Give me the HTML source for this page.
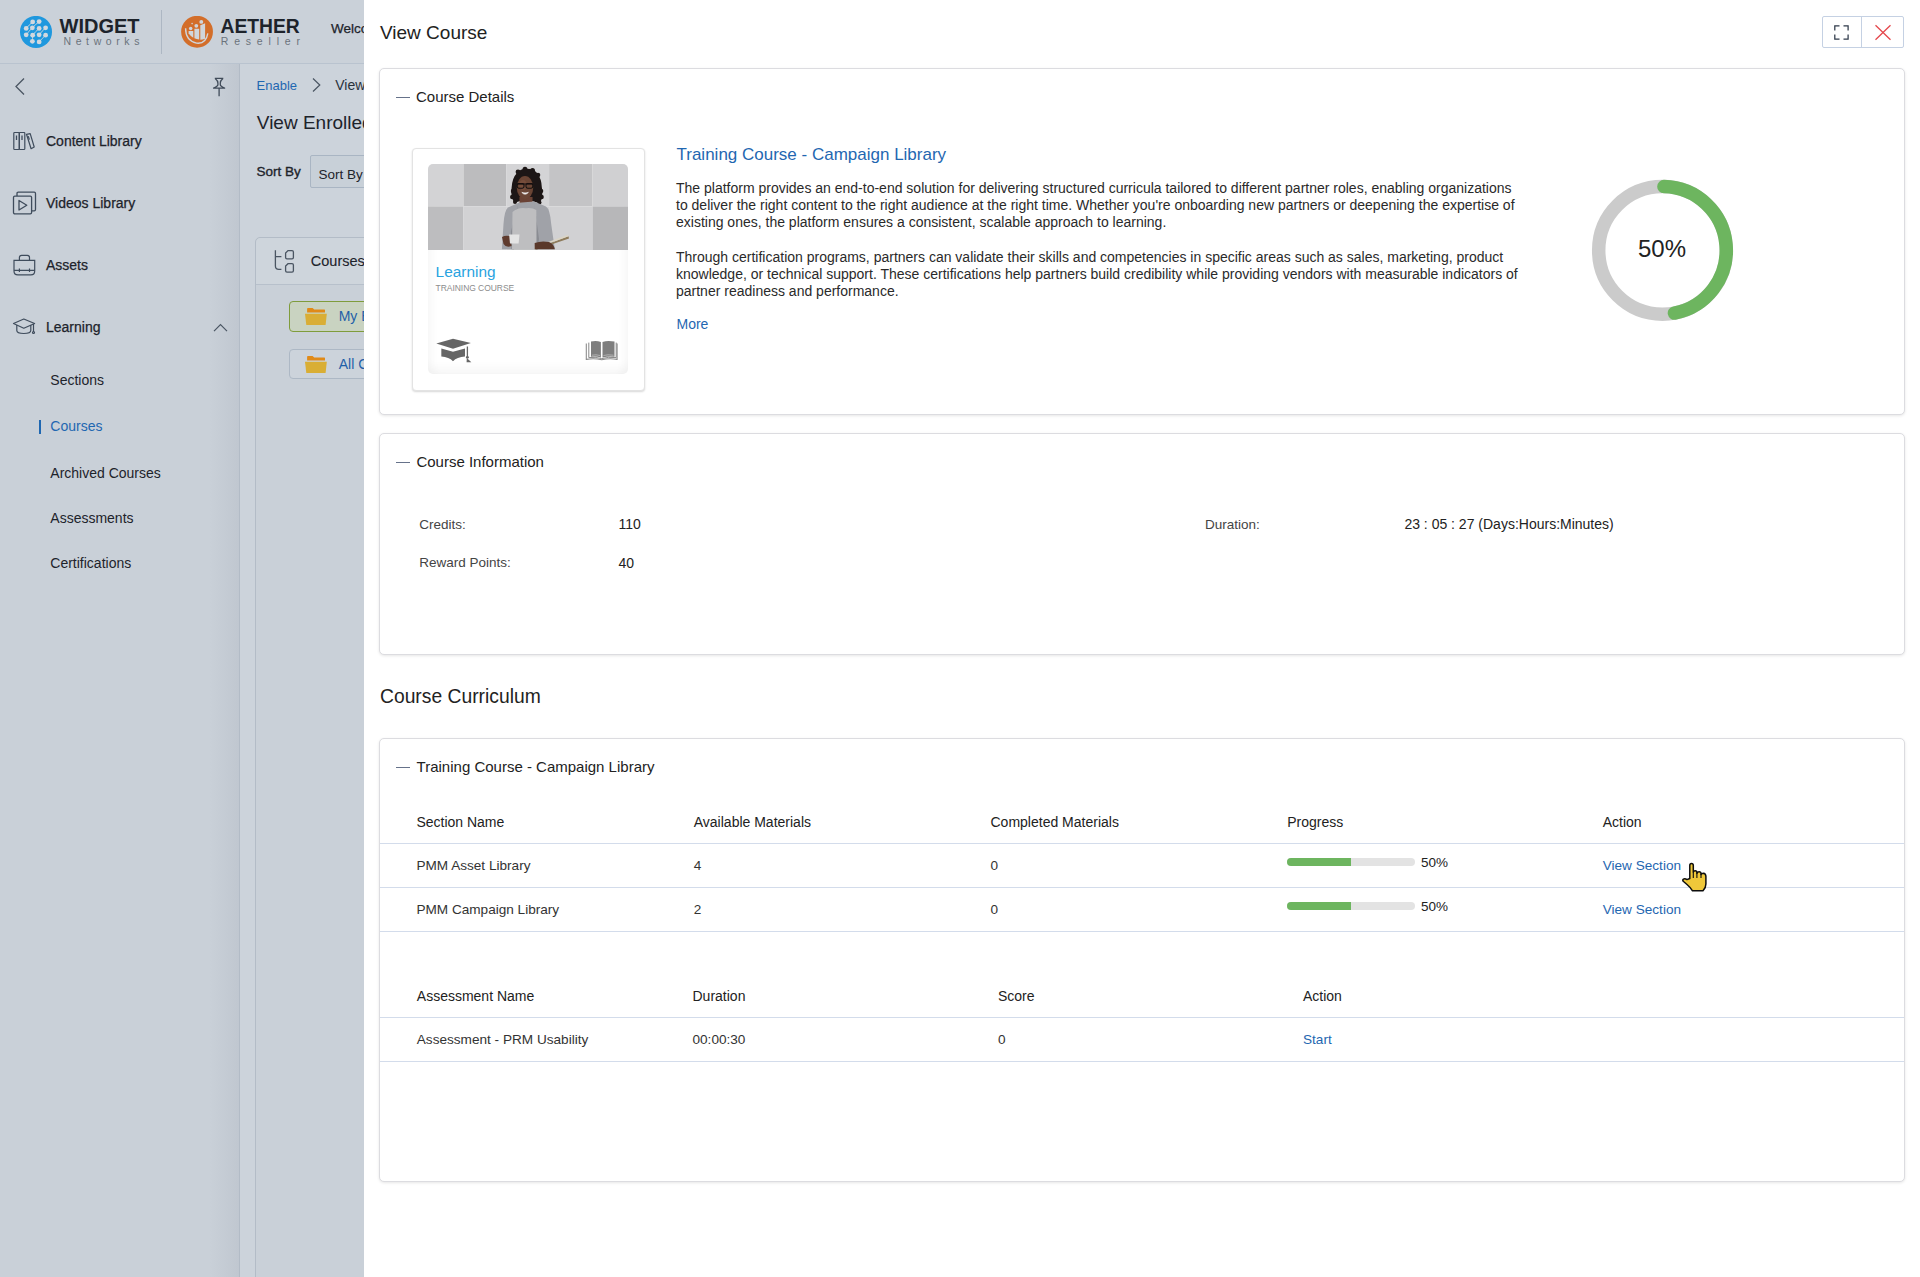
<!DOCTYPE html>
<html><head><meta charset="utf-8">
<style>
*{margin:0;padding:0;box-sizing:border-box}
html,body{width:1920px;height:1277px;overflow:hidden;background:#ccd3db;font-family:"Liberation Sans",sans-serif;color:#222}
.t{position:absolute;white-space:nowrap;line-height:1}
.a{position:absolute}
.card{position:absolute;left:379px;width:1526px;background:#fff;border:1px solid #dcdce0;border-radius:5px;box-shadow:0 1px 3px rgba(0,0,0,.10)}
.dash{position:absolute;left:396px;width:14px;height:1.5px;background:#66728a}

.hl{position:absolute;left:380px;width:1524px;height:1px;background:#d3dceb}
.sb{color:#1d232b;font-size:14px}
.th{font-size:14px;color:#222}
.td{font-size:13.6px;color:#333}
.lnk,.td.lnk{color:#1f67b1}
</style></head><body>
<!-- ===== HEADER ===== -->
<div class="a" id="hdr" style="left:0;top:0;width:364px;height:64px;background:#cad1d9;border-bottom:1px solid #b9c3cf"></div>
<svg class="a" style="left:20px;top:16px" width="32" height="32" viewBox="0 0 32 32">
  <circle cx="16" cy="15.9" r="16" fill="#1f98de"/>
  <g stroke="#d2d8de" stroke-width="0.9" fill="none">
    <path d="M12.66 5.9 Q9 9 6.18 12.38 M19.14 5.6 Q15.5 8.5 12.38 11.8 M12.38 11.8 Q9 15 6.18 18.86 M19.14 12.38 Q15.5 15.5 12.66 19.14 M25.6 11.8 Q22 15 19.14 18.86 M12.66 19.14 Q12.5 22.5 12.38 25.35 M25.6 19.14 Q22 22.5 19.14 25.9"/>
  </g>
  <g fill="#d2d8de">
    <circle cx="12.66" cy="5.9" r="2.4"/><circle cx="19.14" cy="5.6" r="2.4"/>
    <circle cx="6.18" cy="12.38" r="2.4"/><circle cx="12.38" cy="11.8" r="2.4"/><circle cx="19.14" cy="12.38" r="2.4"/><circle cx="25.6" cy="11.8" r="2.4"/>
    <circle cx="6.18" cy="18.86" r="2.4"/><circle cx="12.66" cy="19.14" r="2.4"/><circle cx="19.14" cy="18.86" r="2.4"/><circle cx="25.6" cy="19.14" r="2.4"/>
    <circle cx="12.38" cy="25.35" r="2.4"/><circle cx="19.14" cy="25.9" r="2.4"/>
  </g>
</svg>
<div class="t" style="left:59.5px;top:16.2px;font-size:20px;font-weight:bold;color:#1d232b">WIDGET</div>
<div class="t" style="left:63.5px;top:36.2px;font-size:10.5px;letter-spacing:4.6px;color:#6b737c">Networks</div>
<div class="a" style="left:160.7px;top:9.6px;width:1px;height:44.7px;background:#adb7c3"></div>
<svg class="a" style="left:180.7px;top:16px" width="32" height="32" viewBox="0 0 32 32">
  <circle cx="16.05" cy="15.75" r="15.9" fill="#d36e2a"/>
  <g fill="#d0d6dc">
    <path d="M7.6 14.9 H12.3 V21.8 Q9.5 20 7.6 17.5 Z"/>
    <path d="M13.4 12.7 H18.2 V23.6 Q15.5 23.2 13.4 22.3 Z"/>
    <path d="M19.3 9.2 L24.1 7.3 V22.8 Q21.5 23.6 19.3 23.7 Z"/>
    <circle cx="9.7" cy="12.4" r="1.75"/><circle cx="15.3" cy="9.84" r="1.9"/><circle cx="20.3" cy="5.9" r="1.95"/><circle cx="11.1" cy="7.6" r=".8"/>
  </g>
  <path d="M4.6 12.2 Q4.5 24.5 15.6 27.1 Q25 28.2 26.8 17.4" fill="none" stroke="#d0d6dc" stroke-width="1.4"/>
</svg>
<div class="t" style="left:220.5px;top:16.7px;font-size:19.3px;font-weight:bold;color:#1d232b">AETHER</div>
<div class="t" style="left:220.8px;top:35.9px;font-size:10.5px;letter-spacing:5.8px;color:#6b737c">Reseller</div>
<div class="t" style="left:331px;top:22.2px;font-size:13.5px;color:#1d232b;-webkit-text-stroke:.25px #1d232b">Welcome</div>

<!-- ===== SIDEBAR ===== -->
<div class="a" id="side" style="left:0;top:64px;width:240px;height:1213px;background:linear-gradient(to right,#c9d0d8 0,#c9d0d8 210px,#c0c7d0 239px);border-right:1px solid #b2bbc6"></div>
<svg class="a" style="left:14px;top:77px" width="12" height="19" viewBox="0 0 12 19"><path d="M10 1.5 L2 9.5 L10 17.5" fill="none" stroke="#4a5562" stroke-width="1.3"/></svg>
<svg class="a" style="left:210px;top:74px" width="18" height="26" viewBox="210 74 18 26">
  <path d="M214.8 78.4 H223.3 M215.2 78.6 Q218 81 217.9 83 V84.8 Q217.6 86.2 213.6 88.2 H224.6 Q220.6 86.2 220.3 84.8 V83 Q220.2 81 222.9 78.6 M219.1 88.2 V96.2" fill="none" stroke="#404b59" stroke-width="1.3" stroke-linejoin="round"/>
</svg>
<svg class="a" style="left:12px;top:130px" width="26" height="22" viewBox="0 0 26 22">
  <g fill="none" stroke="#3f4c5c" stroke-width="1.2">
    <rect x="1.8" y="2.5" width="5.5" height="17" rx=".8"/><rect x="7.3" y="2.5" width="5.5" height="17" rx=".8"/>
    <path d="M4.5 5.4 V10 M10 5.4 V10" stroke-width="1.3"/>
    <path d="M14.5 4.3 L18.2 3.6 L22.2 17 L19.1 18.7 Z" stroke-linejoin="round"/>
    <path d="M16.2 6.1 L17.4 9.6"/>
  </g>
</svg>
<div class="t sb" style="left:46px;top:133.85px;-webkit-text-stroke:.25px #1d232b">Content Library</div>
<svg class="a" style="left:12px;top:191px" width="26" height="25" viewBox="0 0 26 25">
  <g fill="none" stroke="#3f4c5c" stroke-width="1.3">
    <path d="M5 5 V2.5 Q5 1.2 6.3 1.2 H22.2 Q23.5 1.2 23.5 2.5 V18.5 Q23.5 19.8 22.2 19.8 H19.6"/>
    <rect x="1.5" y="5.2" width="18.1" height="17.6" rx="1.3"/>
    <path d="M7 9.5 L14.8 14.2 L7 19 Z" stroke-linejoin="round"/>
  </g>
</svg>
<div class="t sb" style="left:46px;top:195.85px;-webkit-text-stroke:.25px #1d232b">Videos Library</div>
<svg class="a" style="left:12px;top:253px" width="26" height="24" viewBox="0 0 26 24">
  <g fill="none" stroke="#3f4c5c" stroke-width="1.2">
    <path d="M7.4 7.3 V4.5 Q7.4 2.3 9.6 2.3 H15.3 Q17.5 2.3 17.5 4.5 V7.3"/>
    <path d="M2 7.3 H22.7 V18 Q22.7 21.9 18.8 21.9 H5.9 Q2 21.9 2 18 Z"/>
    <path d="M2 17.4 H22.7 M7.4 15.5 V19 M17.5 15.5 V19"/>
  </g>
</svg>
<div class="t sb" style="left:46px;top:257.95px;-webkit-text-stroke:.25px #1d232b">Assets</div>
<svg class="a" style="left:12px;top:317px" width="26" height="19" viewBox="0 0 26 19">
  <g fill="none" stroke="#3f4c5c" stroke-width="1.2" stroke-linejoin="round">
    <path d="M1.5 6.5 L11.8 2 L22.6 6.5 L11.8 11.2 Z"/>
    <path d="M4.8 8 V13.5 Q4.8 16.5 11.8 16.5 Q18.8 16.5 18.8 13.5 V8"/>
    <path d="M21.5 7 V14.8"/><circle cx="21.5" cy="15.5" r="1"/>
  </g>
</svg>
<div class="t sb" style="left:46px;top:319.95px;-webkit-text-stroke:.25px #1d232b">Learning</div>
<svg class="a" style="left:212px;top:322px" width="17" height="11" viewBox="0 0 17 11"><path d="M2 9.2 L8.5 2.5 L15 9.2" fill="none" stroke="#4a5562" stroke-width="1.2"/></svg>
<div class="t sb" style="left:50.3px;top:373.25px">Sections</div>
<div class="a" style="left:39px;top:420px;width:2.4px;height:14px;background:#1f67b1"></div>
<div class="t sb" style="left:50.3px;top:419.15px;color:#1f67b1">Courses</div>
<div class="t sb" style="left:50.3px;top:466.15px">Archived Courses</div>
<div class="t sb" style="left:50.3px;top:510.95px">Assessments</div>
<div class="t sb" style="left:50.3px;top:555.65px">Certifications</div>

<!-- ===== MAIN (background page) ===== -->
<div class="a" id="main" style="left:240px;top:64px;width:124px;height:1213px;background:#ccd3db"></div>
<div class="t" style="left:256.6px;top:78.6px;font-size:13px;color:#1f67b1">Enable</div>
<svg class="a" style="left:311px;top:77px" width="11" height="16" viewBox="0 0 11 16"><path d="M2 1.5 L8.8 8 L2 14.5" fill="none" stroke="#4a5562" stroke-width="1.2"/></svg>
<div class="t" style="left:335.2px;top:77.75px;font-size:14px;color:#2a323b">View</div>
<div class="t" style="left:256.8px;top:112.9px;font-size:19px;color:#1d232b">View Enrolled Courses</div>
<div class="t" style="left:256.6px;top:164.8px;font-size:13.5px;color:#1d232b;-webkit-text-stroke:.35px #1d232b">Sort By</div>
<div class="a" style="left:310.3px;top:155.4px;width:120px;height:33px;background:#c8d0d8;border:1px solid #a9b5c3;border-radius:2px"></div>
<div class="t" style="left:318.5px;top:167.6px;font-size:13.5px;color:#1d232b">Sort By</div>
<div class="a" style="left:255px;top:236.6px;width:200px;height:1100px;background:#c9d0d8;border:1px solid #b3bcc7;border-radius:5px"></div>
<div class="a" style="left:256px;top:237.6px;width:200px;height:47px;background:#ced5dc;border-bottom:1px solid #b7c0cb;border-radius:5px 5px 0 0"></div>
<svg class="a" style="left:273px;top:248px" width="23" height="27" viewBox="0 0 23 27">
  <g fill="none" stroke="#4a5562" stroke-width="1.3">
    <path d="M2.4 2.3 V18 Q2.4 21.4 5.8 21.4 H8.4 M2.4 8.6 H8.4"/>
    <path d="M15 2.6 H19 Q20.4 2.6 20.4 4 V9.5 Q20.4 10.9 19 10.9 H14 Q12.6 10.9 12.6 9.5 V5 Z"/>
    <path d="M15 15.7 H19 Q20.4 15.7 20.4 17.1 V22.8 Q20.4 24.2 19 24.2 H14 Q12.6 24.2 12.6 22.8 V18.1 Z"/>
  </g>
</svg>
<div class="t" style="left:310.8px;top:253.95px;font-size:14.5px;color:#1d232b;-webkit-text-stroke:.1px #1d232b">Courses</div>
<div class="a" style="left:289.3px;top:301px;width:120px;height:31px;background:#c9d3c1;border:1.5px solid #7f9c3c;border-radius:4px"></div>
<svg class="a" style="left:304px;top:306px" width="23" height="21" viewBox="0 0 23 21">
  <path d="M3.1 2.9 Q3.1 2.1 3.9 2.1 H8.6 L10.2 3.4 H20.4 Q21 3.4 21 4 V6.4 H3.1 Z" fill="#e08a18"/>
  <path d="M1 7.8 H22.8 L21.6 19 H2.3 Z" fill="#d9ae35"/>
</svg>
<div class="t" style="left:338.7px;top:309.15px;font-size:14px;color:#1f5fa8">My Enrolled</div>
<div class="a" style="left:289.3px;top:348.6px;width:120px;height:30.5px;background:#ccd3db;border:1px solid #adb8c5;border-radius:4px"></div>
<svg class="a" style="left:304px;top:353.5px" width="23" height="21" viewBox="0 0 23 21">
  <path d="M3.1 2.9 Q3.1 2.1 3.9 2.1 H8.6 L10.2 3.4 H20.4 Q21 3.4 21 4 V6.4 H3.1 Z" fill="#e08a18"/>
  <path d="M1 7.8 H22.8 L21.6 19 H2.3 Z" fill="#d9ae35"/>
</svg>
<div class="t" style="left:338.7px;top:356.5px;font-size:14px;color:#1f5fa8">All Courses</div>

<!-- ===== MODAL ===== -->
<div class="a" id="modal" style="left:364px;top:0;width:1556px;height:1277px;background:#fff"></div>

<div class="t" style="left:380px;top:22.9px;font-size:19px;color:#222">View Course</div>
<div class="a" style="left:1821.5px;top:16.2px;width:82px;height:32.3px;border:1px solid #c5d1e3;border-radius:2px;background:#fff"></div>
<div class="a" style="left:1861px;top:16.2px;width:1px;height:32.3px;background:#c5d1e3"></div>
<svg class="a" style="left:1832px;top:23px" width="19" height="19" viewBox="0 0 19 19">
  <path d="M2.8 7.5 V2.9 H7.5 M11.5 2.9 H16.1 V7.5 M16.1 11.5 V16.1 H11.5 M7.5 16.1 H2.8 V11.5" fill="none" stroke="#2f3a4a" stroke-width="1.25"/>
</svg>
<svg class="a" style="left:1873px;top:23px" width="19" height="19" viewBox="0 0 19 19">
  <path d="M2.5 2.2 L17.5 16.8 M17.5 2.2 L2.5 16.8" fill="none" stroke="#e5484d" stroke-width="1.3"/>
</svg>

<!-- card 1: course details -->
<div class="card" style="top:68px;height:347px"></div>
<div class="dash" style="top:96.5px"></div>
<div class="t" style="left:416px;top:89.3px;font-size:15px;color:#222">Course Details</div>


<!-- thumbnail card -->
<div class="a" style="left:411.5px;top:147.5px;width:233px;height:243.5px;background:#fff;border:1px solid #e3e3e3;border-radius:4px;box-shadow:0 1px 2px rgba(0,0,0,.16)"></div>
<div class="a" style="left:428px;top:164.4px;width:200px;height:210px;border-radius:5px;overflow:hidden;background:#fff;box-shadow:inset 0 -10px 10px -4px rgba(0,0,0,.035), inset 8px 0 10px -4px rgba(0,0,0,.03), inset -8px 0 10px -4px rgba(0,0,0,.03)">
  <svg class="a" style="left:0;top:0" width="200" height="86" viewBox="0 0 200 86">
    <defs><filter id="bl" x="-5%" y="-5%" width="110%" height="110%"><feGaussianBlur stdDeviation="0.45"/></filter></defs>
    <g filter="url(#bl)">
    <rect x="0" y="0" width="35.5" height="42.4" fill="#d3d3d5"/>
    <rect x="35.5" y="0" width="42.7" height="42.4" fill="#bcbcbe"/>
    <rect x="78.2" y="0" width="42.9" height="42.4" fill="#d4d4d6"/>
    <rect x="121.1" y="0" width="43.4" height="42.4" fill="#c4c4c6"/>
    <rect x="164.5" y="0" width="35.5" height="42.4" fill="#d0d0d2"/>
    <rect x="0" y="42.4" width="35.5" height="43.6" fill="#bdbdbf"/>
    <rect x="35.5" y="42.4" width="42.7" height="43.6" fill="#d2d2d4"/>
    <rect x="78.2" y="42.4" width="42.9" height="43.6" fill="#cfcfd1"/>
    <rect x="121.1" y="42.4" width="43.4" height="43.6" fill="#d1d1d3"/>
    <rect x="164.5" y="42.4" width="35.5" height="43.6" fill="#b7b7b9"/>
    <!-- hair -->
    <g fill="#1f1816">
      <path d="M98 4.8 Q106 4.6 109.5 9.5 Q113.5 15 113.8 23 Q115.5 31 112.2 39.5 L104 37 L92 37 L86.2 39 Q82.3 31 83.6 24 Q84 14 89 9 Q92.5 4.8 98 4.8 Z"/>
      <circle cx="85" cy="27" r="2.2"/><circle cx="84.3" cy="33" r="2.3"/><circle cx="87" cy="38" r="2"/>
      <circle cx="113" cy="27" r="2.3"/><circle cx="113.6" cy="33" r="2.2"/><circle cx="111.5" cy="38.5" r="2"/>
      <circle cx="90" cy="8" r="2.4"/><circle cx="97" cy="5.2" r="2.5"/><circle cx="104.5" cy="6.5" r="2.5"/><circle cx="110" cy="11" r="2.3"/>
    </g>
    <!-- neck -->
    <path d="M91.5 33 H104.5 V41 Q98 46 91.5 41 Z" fill="#6a4334"/>
    <!-- blazer -->
    <path d="M73.9 85.3 L75.5 60 Q76.5 46 80 43.5 L90.8 38.8 L106 37.6 L118 42.5 Q122 45 123.2 60 L126.8 85.3 Z" fill="#a0a2a8"/>
    <path d="M90.8 38.8 L82.9 67.6 L83.5 85.3 L86 85.3 L85.5 55 Z M106 37.6 L111 74.9 L110 85.3 L108 85.3 L108.5 55 Z" fill="#8a8c92"/>
    <!-- shirt -->
    <path d="M84 85.3 L84.5 48 Q90 43 98 44.2 Q104.5 43.5 108.3 46 L108.5 85.3 Z" fill="#bebec0"/>
    <!-- face -->
    <ellipse cx="97" cy="23.6" rx="8.2" ry="11.6" fill="#6b4434"/>
    <ellipse cx="95" cy="21" rx="4" ry="5" fill="#7d5340" opacity=".6"/>
    <path d="M88.8 20 H105.4" stroke="#141010" stroke-width="1"/>
    <rect x="89.2" y="19.6" width="6.8" height="4.6" rx="1.6" fill="none" stroke="#141010" stroke-width="1.1"/>
    <rect x="98" y="19.6" width="6.8" height="4.6" rx="1.6" fill="none" stroke="#141010" stroke-width="1.1"/>
    <path d="M93.8 28.4 Q97 32 100.4 28.4 Q97 29.4 93.8 28.4 Z" fill="#ececec" stroke="#ececec" stroke-width=".7"/>
    <!-- hands, cup, book -->
    <path d="M74 73 Q77 71 82 72 L83.6 82 Q78 84 75.5 80 Z" fill="#5e3b2e"/>
    <path d="M81.1 70.5 H91.5 L90.6 79.5 H82 Z" fill="#e4e4e4"/>
    <path d="M106.7 85 L140.5 72.3 L141 74.6 L108.5 85.6 Z" fill="#8e7b5c"/>
    <path d="M106.7 82.8 L139.8 71 L140.5 72.3 L106.7 84.5 Z" fill="#dcd5c4"/>
    <path d="M106.7 79 Q113 76.5 121 78 Q126 80 126.8 85.3 L106.7 85.3 Z" fill="#5a392c"/>
    </g>
  </svg>
  <div class="t" style="left:7.6px;top:100.1px;font-size:15.4px;color:#29a3e0">Learning</div>
  <div class="t" style="left:7.6px;top:120.1px;font-size:8.5px;color:#8c8c8c;letter-spacing:-.05px">TRAINING COURSE</div>
  <svg class="a" style="left:8px;top:173px" width="38" height="28" viewBox="0 0 38 28">
    <path d="M0.3 6.45 L17 1.77 L34.9 6.1 L17 11.66 Z" fill="#666"/>
    <path d="M5.33 11.6 L17 14.8 L28.98 11.6 L28.98 19.4 Q21 19.8 17 24.2 Q13 19.8 5.33 19.4 Z" fill="#666"/>
    <path d="M31.4 9.6 L31.4 20" stroke="#666" stroke-width="1.3"/>
    <circle cx="31.4" cy="20.3" r="1.4" fill="#666"/>
    <path d="M30.8 21 L30.6 25.3 L35.3 25.3 Z" fill="#666"/>
  </svg>
  <svg class="a" style="left:157px;top:176px" width="34" height="22" viewBox="0 0 34 22">
    <path d="M6 1.6 Q11 0.2 15.9 2 V17.4 Q11 15.8 6 16.8 Z" fill="#7e7e7e"/>
    <path d="M17.5 2 Q22.5 0.2 29.5 1.6 V16.8 Q24 15.8 17.5 17.4 Z" fill="#7e7e7e"/>
    <path d="M3.8 2.6 V17.6 Q10 16.6 16.7 18.6 Q23.4 16.6 31.2 17.6 V2.6" fill="none" stroke="#888" stroke-width="1"/>
    <path d="M1.3 3.4 V19.4 Q9 18 16.7 19.8 Q24.4 18 32.1 19.4 V3.4" fill="none" stroke="#8c8c8c" stroke-width="1.1"/>
    <path d="M7 15.2 Q11 14.3 15 15.5 M18.5 15.5 Q22.5 14.3 28.5 15.2" stroke="#b5b5b5" stroke-width=".9" fill="none"/>
  </svg>
</div>

<!-- title + description -->
<div class="t lnk" style="left:676.5px;top:145.9px;font-size:17px">Training Course - Campaign Library</div>
<div class="a" style="left:676px;top:180.4px;font-size:14px;line-height:17px;color:#2a2a2a;white-space:nowrap">The platform provides an end-to-end solution for delivering structured curricula tailored to different partner roles, enabling organizations<br>to deliver the right content to the right audience at the right time. Whether you're onboarding new partners or deepening the expertise of<br>existing ones, the platform ensures a consistent, scalable approach to learning.</div>
<div class="a" style="left:676px;top:248.7px;font-size:14px;line-height:17px;color:#2a2a2a;white-space:nowrap">Through certification programs, partners can validate their skills and competencies in specific areas such as sales, marketing, product<br>knowledge, or technical support. These certifications help partners build credibility while providing vendors with measurable indicators of<br>partner readiness and performance.</div>
<div class="t lnk" style="left:676.5px;top:316.6px;font-size:14px">More</div>

<!-- donut -->
<svg class="a" style="left:1582px;top:170px" width="161" height="161" viewBox="0 0 161 161">
  <circle cx="80.5" cy="80.4" r="63.8" fill="none" stroke="#cbcbcb" stroke-width="13.5"/>
  <path d="M 81.95 16.62 A 63.8 63.8 0 0 1 92.46 143.07" fill="none" stroke="#6db55f" stroke-width="13.5" stroke-linecap="round"/>
</svg>
<div class="t" style="left:1638px;top:237.4px;font-size:24px;color:#222">50%</div>

<!-- card 2: course information -->
<div class="card" style="top:433px;height:222px"></div>
<div class="dash" style="top:461.5px"></div>
<div class="t" style="left:416.4px;top:454px;font-size:15px;color:#222">Course Information</div>
<div class="t" style="left:419.3px;top:517.9px;font-size:13.5px;color:#444">Credits:</div>
<div class="t" style="left:618.5px;top:517.45px;font-size:14px;color:#222">110</div>
<div class="t" style="left:419.3px;top:556.2px;font-size:13.5px;color:#444">Reward Points:</div>
<div class="t" style="left:618.5px;top:555.75px;font-size:14px;color:#222">40</div>
<div class="t" style="left:1205px;top:517.9px;font-size:13.5px;color:#444">Duration:</div>
<div class="t" style="left:1404.4px;top:517.45px;font-size:14px;color:#222">23 : 05 : 27 (Days:Hours:Minutes)</div>

<div class="t" style="left:380px;top:687.2px;font-size:19.3px;color:#222">Course Curriculum</div>

<!-- card 3: curriculum -->
<div class="card" style="top:738px;height:444px"></div>
<div class="dash" style="top:766.5px"></div>
<div class="t" style="left:416.6px;top:759.4px;font-size:15px;color:#222">Training Course - Campaign Library</div>

<div class="t th" style="left:416.4px;top:815.15px">Section Name</div>
<div class="t th" style="left:693.75px;top:815.15px">Available Materials</div>
<div class="t th" style="left:990.5px;top:815.15px">Completed Materials</div>
<div class="t th" style="left:1287.2px;top:815.15px">Progress</div>
<div class="t th" style="left:1602.7px;top:815.15px">Action</div>
<div class="hl" style="top:843px"></div>
<div class="t td" style="left:416.4px;top:859.09px">PMM Asset Library</div>
<div class="t td" style="left:693.75px;top:859.09px">4</div>
<div class="t td" style="left:990.5px;top:859.09px">0</div>
<div class="t td lnk" style="left:1602.7px;top:859.2px;font-size:13.6px">View Section</div>
<div class="hl" style="top:887px"></div>
<div class="t td" style="left:416.4px;top:902.99px">PMM Campaign Library</div>
<div class="t td" style="left:693.75px;top:902.99px">2</div>
<div class="t td" style="left:990.5px;top:902.99px">0</div>
<div class="t td lnk" style="left:1602.7px;top:903.1px;font-size:13.6px">View Section</div>
<div class="hl" style="top:931px"></div>

<div class="a" style="left:1287px;top:858px;width:128px;height:8px;border-radius:4px;background:#e3e3e3;overflow:hidden"><div style="width:64px;height:8px;background:#6db55f"></div></div>
<div class="t" style="left:1421px;top:855.6px;font-size:13.5px;color:#222">50%</div>
<div class="a" style="left:1287px;top:902px;width:128px;height:8px;border-radius:4px;background:#e3e3e3;overflow:hidden"><div style="width:64px;height:8px;background:#6db55f"></div></div>
<div class="t" style="left:1421px;top:899.6px;font-size:13.5px;color:#222">50%</div>

<div class="t th" style="left:416.8px;top:988.95px">Assessment Name</div>
<div class="t th" style="left:692.5px;top:988.95px">Duration</div>
<div class="t th" style="left:998px;top:988.95px">Score</div>
<div class="t th" style="left:1303px;top:988.95px">Action</div>
<div class="hl" style="top:1017px"></div>
<div class="t td" style="left:416.8px;top:1033.19px">Assessment - PRM Usability</div>
<div class="t td" style="left:692.5px;top:1033.19px">00:00:30</div>
<div class="t td" style="left:998px;top:1033.19px">0</div>
<div class="t td lnk" style="left:1303px;top:1033.19px">Start</div>
<div class="hl" style="top:1061px"></div>

<svg class="a" style="left:1678px;top:860px" width="32" height="34" viewBox="1678 860 32 34">
  <path d="M1689.8 878.5 V865.5 Q1689.8 863.6 1691.5 863.6 Q1693.3 863.6 1693.3 865.5 V872 Q1693.5 870.7 1695.2 870.7 Q1696.9 870.7 1696.9 872.5 V873.2 Q1697.3 871.7 1699.1 871.7 Q1701 871.7 1701 873.5 V874.5 Q1701.4 873.2 1703.4 873.2 Q1705.9 873.4 1705.9 876.5 V884 Q1705.9 887.8 1703 890.8 H1692.5 Q1690 887 1687 884.5 L1683.5 881.5 Q1682.1 880 1683.4 879.1 Q1685 878.3 1687 879.6 Z" fill="#efc83a" stroke="#0d0d0d" stroke-width="1.5" stroke-linejoin="round"/>
  <path d="M1693.3 872 V878 M1696.9 873 V878 M1701 874 V878" stroke="#0d0d0d" stroke-width="1.1"/>
</svg>
</body></html>
